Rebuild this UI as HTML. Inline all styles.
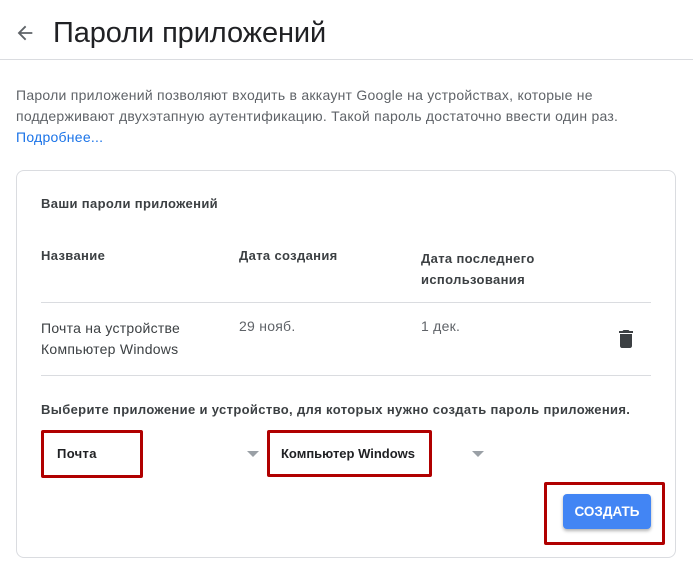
<!DOCTYPE html>
<html><head><meta charset="utf-8"><style>
body{margin:0;width:693px;height:575px;background:#fff;font-family:"Liberation Sans",Arial,sans-serif;color:#202124;position:relative;overflow:hidden}
.a{position:absolute;white-space:nowrap}
.t{font-size:14px;letter-spacing:0.25px}
.b{font-weight:bold;color:#3c4043;font-size:13px;letter-spacing:0.35px}
.red{position:absolute;border:3px solid #b00000;border-radius:2px;box-sizing:border-box}
.arr{position:absolute;width:0;height:0;border-left:6px solid transparent;border-right:6px solid transparent;border-top:6px solid #9aa0a6}
</style></head><body>
<svg class="a" style="left:14px;top:22px" width="22" height="22" viewBox="0 0 24 24"><path d="M20 11H7.8l5.6-5.6L12 4l-8 8 8 8 1.4-1.4L7.8 13H20z" fill="#5f6368"/></svg>
<div class="a" style="left:53px;top:17px;font-size:29px;letter-spacing:-0.1px;color:#202124">Пароли приложений</div>
<div class="a" style="left:0;top:59px;width:693px;height:1px;background:#dadce0"></div>
<div class="a t" style="left:16px;top:85px;color:#5f6368;line-height:21px">Пароли приложений позволяют входить в аккаунт Google на устройствах, которые не<br>поддерживают двухэтапную аутентификацию. Такой пароль достаточно ввести один раз.<br><span style="color:#1a73e8">Подробнее...</span></div>
<div class="a" style="left:16px;top:170px;width:660px;height:388px;border:1px solid #dadce0;border-radius:8px;box-sizing:border-box"></div>
<div class="a b" style="left:41px;top:196px">Ваши пароли приложений</div>
<div class="a b" style="left:41px;top:248px">Название</div>
<div class="a b" style="left:239px;top:248px">Дата создания</div>
<div class="a b" style="left:421px;top:248px;line-height:21px">Дата последнего<br>использования</div>
<div class="a" style="left:41px;top:302px;width:610px;height:1px;background:#dadce0"></div>
<div class="a t" style="left:41px;top:318px;line-height:21px;color:#3c4043">Почта на устройстве<br>Компьютер Windows</div>
<div class="a t" style="left:239px;top:318px;color:#5f6368">29 нояб.</div>
<div class="a t" style="left:421px;top:318px;color:#5f6368">1 дек.</div>
<svg class="a" style="left:614px;top:327px" width="24" height="24" viewBox="0 0 24 24"><path d="M6 19c0 1.1.9 2 2 2h8c1.1 0 2-.9 2-2V7H6v12zM19 4h-3.5l-1-1h-5l-1 1H5v2h14V4z" fill="#3c4043"/></svg>
<div class="a" style="left:41px;top:375px;width:610px;height:1px;background:#dadce0"></div>
<div class="a b" style="left:41px;top:402px">Выберите приложение и устройство, для которых нужно создать пароль приложения.</div>
<div class="a b" style="left:57px;top:446px;color:#202124">Почта</div>
<div class="arr" style="left:247px;top:451px"></div>
<div class="a b" style="left:281px;top:446px;color:#202124;letter-spacing:0">Компьютер Windows</div>
<div class="arr" style="left:472px;top:451px"></div>
<div class="red" style="left:41px;top:430px;width:102px;height:48px"></div>
<div class="red" style="left:267px;top:430px;width:165px;height:47px"></div>
<div class="a" style="left:563px;top:494px;width:88px;height:35px;background:#4285f4;border-radius:4px;box-shadow:0 2px 3px rgba(0,0,0,.3);color:#fff;font-weight:bold;font-size:13.5px;text-align:center;line-height:35px">СОЗДАТЬ</div>
<div class="red" style="left:544px;top:482px;width:121px;height:63px"></div>
</body></html>
